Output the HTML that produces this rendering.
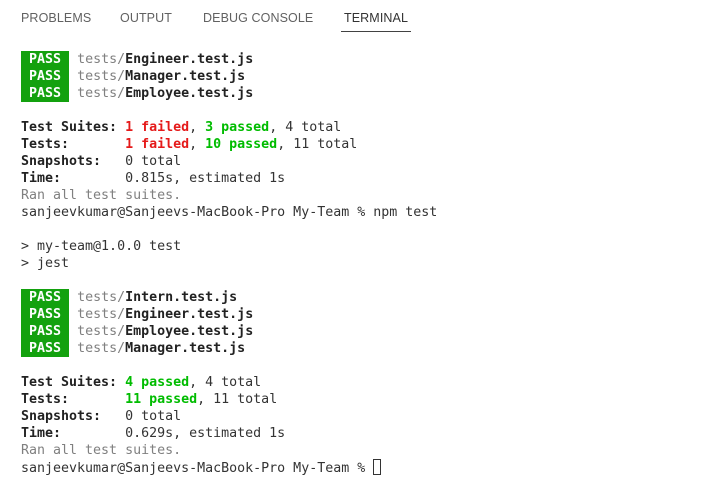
<!DOCTYPE html>
<html><head><style>
body{margin:0;width:726px;height:477px;background:#fff;overflow:hidden;position:relative}
.tab{position:absolute;top:11px;font:12.5px "Liberation Sans",sans-serif;color:#616161;letter-spacing:0.1px}
.ul{position:absolute;left:341px;top:31px;width:70px;height:1px;background:#424242}
.term{position:absolute;left:21px;top:51px;font:13.3px "DejaVu Sans Mono",monospace;line-height:17px;color:#333;white-space:pre}
.p{background:#13a10e;color:#fff;font-weight:bold;display:inline-block;height:17px;line-height:17px;vertical-align:top}
.g{color:#808080}
b{font-weight:bold;color:#222}
.r{color:#e51a1a;font-weight:bold}
.gr{color:#00bc00;font-weight:bold}
.cur{display:inline-block;width:8px;height:16px;border:1px solid #333;box-sizing:border-box;vertical-align:-3px}
</style></head><body>
<div class="tab" style="left:21px">PROBLEMS</div>
<div class="tab" style="left:120px">OUTPUT</div>
<div class="tab" style="left:203px">DEBUG CONSOLE</div>
<div class="tab" style="left:344px;color:#333">TERMINAL</div>
<div class="ul"></div>
<div class="term"><span class="p"> PASS </span> <span class="g">tests/</span><b>Engineer.test.js</b>
<span class="p"> PASS </span> <span class="g">tests/</span><b>Manager.test.js</b>
<span class="p"> PASS </span> <span class="g">tests/</span><b>Employee.test.js</b>

<b>Test Suites: </b><span class="r">1 failed</span>, <span class="gr">3 passed</span>, 4 total
<b>Tests:       </b><span class="r">1 failed</span>, <span class="gr">10 passed</span>, 11 total
<b>Snapshots:   </b>0 total
<b>Time:        </b>0.815s, estimated 1s
<span class="g">Ran all test suites.</span>
sanjeevkumar@Sanjeevs-MacBook-Pro My-Team % npm test

&gt; my-team@1.0.0 test
&gt; jest

<span class="p"> PASS </span> <span class="g">tests/</span><b>Intern.test.js</b>
<span class="p"> PASS </span> <span class="g">tests/</span><b>Engineer.test.js</b>
<span class="p"> PASS </span> <span class="g">tests/</span><b>Employee.test.js</b>
<span class="p"> PASS </span> <span class="g">tests/</span><b>Manager.test.js</b>

<b>Test Suites: </b><span class="gr">4 passed</span>, 4 total
<b>Tests:       </b><span class="gr">11 passed</span>, 11 total
<b>Snapshots:   </b>0 total
<b>Time:        </b>0.629s, estimated 1s
<span class="g">Ran all test suites.</span>
sanjeevkumar@Sanjeevs-MacBook-Pro My-Team % <span class="cur"></span></div>
</body></html>
